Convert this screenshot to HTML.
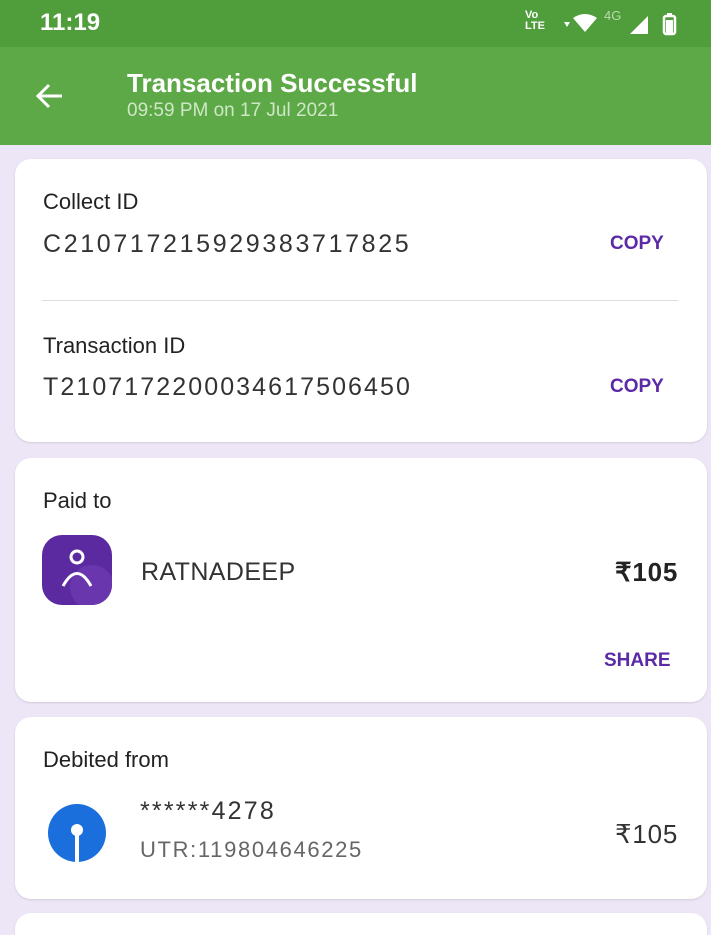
<!DOCTYPE html>
<html style="width:711px;height:935px;overflow:hidden"><head><meta charset="utf-8"><style>
*{box-sizing:border-box;margin:0;padding:0}
body{width:711px;height:935px;overflow:hidden;background:#ede6f6;font-family:"Liberation Sans",sans-serif;position:relative}
.status{position:absolute;left:0;top:0;width:711px;height:47px;background:#509d3c;color:#fff}
.bar{position:absolute;left:0;top:47px;width:711px;height:98px;background:#5ea947;color:#fff}
.card{position:absolute;left:15px;width:692px;background:#fff;border-radius:16px;box-shadow:0 1px 2px rgba(0,0,0,.12)}
.t{position:absolute;white-space:nowrap}
.lab{font-size:22px;color:#222}
.val{font-size:25px;color:#333}
.btn{font-size:19px;color:#5b2aa6;font-weight:bold}
</style></head><body>
<div class="status">
 <div class="t" style="left:40px;top:9px;font-size:24px;font-weight:bold">11:19</div>
 <div class="t" style="left:525px;top:10px;font-size:11px;line-height:11px;font-weight:bold">Vo<br>LTE</div>
 <svg style="position:absolute;left:562px;top:8px" width="130" height="28"><path d="M2 14h6l-3 5z" fill="#fff"/><path d="M11 10 Q23 2 35 10 L23 24Z" fill="#fff"/><text x="42" y="12" font-size="13" fill="#b8dcae" font-family="Liberation Sans">4G</text><path d="M68 26 L86 8 V26Z" fill="#fff"/><rect x="102" y="8" width="11" height="18" rx="2" fill="none" stroke="#fff" stroke-width="2.5"/><rect x="104" y="12" width="7" height="13" fill="#fff"/><rect x="105" y="5" width="5" height="3" fill="#fff"/></svg>
</div>
<div class="bar">
 <svg style="position:absolute;left:34px;top:34px" width="32" height="30"><path d="M28 15H4M15 4 4 15l11 11" stroke="#fff" stroke-width="3" fill="none"/></svg>
 <div class="t" style="left:127px;top:21px;font-size:26px;font-weight:bold">Transaction Successful</div>
 <div class="t" style="left:127px;top:53px;font-size:19px;color:#cfe7c6">09:59 PM on 17 Jul 2021</div>
</div>
<div class="card" style="top:159px;height:283px">
 <div class="t lab" style="left:28px;top:30px">Collect ID</div>
 <div class="t val" style="left:28px;top:71px;letter-spacing:2.65px">C210717215929383717825</div>
 <div class="t btn" style="left:595px;top:74px">COPY</div>
 <div style="position:absolute;left:27px;top:141px;width:636px;height:1px;background:#ddd"></div>
 <div class="t lab" style="left:28px;top:174px">Transaction ID</div>
 <div class="t val" style="left:28px;top:214px;letter-spacing:2.08px">T2107172200034617506450</div>
 <div class="t btn" style="left:595px;top:217px">COPY</div>
</div>
<div class="card" style="top:458px;height:244px">
 <div class="t lab" style="left:28px;top:30px">Paid to</div>
 <svg style="position:absolute;left:27px;top:77px" width="70" height="70"><defs><clipPath id="c"><rect width="70" height="70" rx="20"/></clipPath></defs><g clip-path="url(#c)"><rect width="70" height="70" fill="#5c2aa0"/><circle cx="50" cy="52" r="22" fill="#6a36ad"/></g><circle cx="35" cy="22" r="6" fill="none" stroke="#fff" stroke-width="3"/><path d="M21 51 Q35 26 49 51" fill="none" stroke="#fff" stroke-width="3"/></svg>
 <div class="t" style="left:126px;top:100px;font-size:25px;color:#333;letter-spacing:.4px">RATNADEEP</div>
 <div class="t" style="left:600px;top:99px;font-size:26px;font-weight:bold;color:#222;letter-spacing:.8px">₹105</div>
 <div class="t btn" style="left:589px;top:192px">SHARE</div>
</div>
<div class="card" style="top:717px;height:182px">
 <div class="t lab" style="left:28px;top:30px">Debited from</div>
 <svg style="position:absolute;left:33px;top:87px" width="60" height="60"><circle cx="29" cy="29" r="29" fill="#1a6fdc"/><circle cx="29" cy="26" r="6" fill="#fff"/><rect x="27" y="26" width="4" height="32" fill="#fff"/></svg>
 <div class="t" style="left:125px;top:80px;font-size:25px;color:#333;letter-spacing:2.2px">******4278</div>
 <div class="t" style="left:125px;top:120px;font-size:22px;color:#666;letter-spacing:1.65px">UTR:119804646225</div>
 <div class="t" style="left:600px;top:102px;font-size:26px;color:#333;letter-spacing:.8px">₹105</div>
</div>
<div class="card" style="top:913px;height:60px"></div>
</body></html>
